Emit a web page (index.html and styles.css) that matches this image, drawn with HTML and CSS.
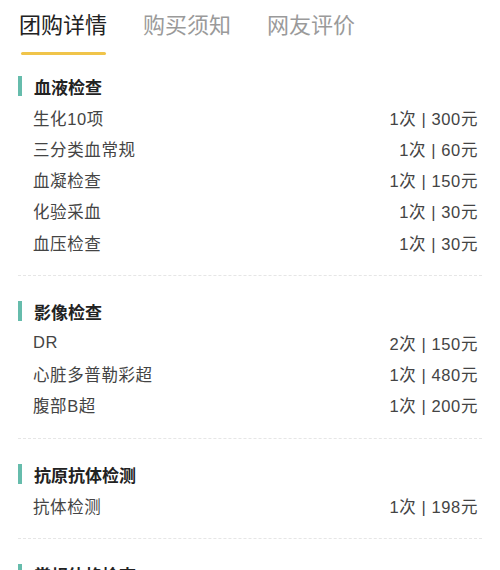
FILE: index.html
```html
<!DOCTYPE html>
<html lang="zh">
<head>
<meta charset="utf-8">
<link rel="stylesheet" href="styles.css">
</head>
<body>
<div class="tabs">
  <div class="tab active"><span>团购详情</span><i class="underline"></i></div>
  <div class="tab"><span>购买须知</span></div>
  <div class="tab"><span>网友评价</span></div>
</div>
<div class="section first">
  <div class="heading">血液检查</div>
  <div class="row"><span>生化10项</span><span>1次 | 300元</span></div>
  <div class="row"><span>三分类血常规</span><span>1次 | 60元</span></div>
  <div class="row"><span>血凝检查</span><span>1次 | 150元</span></div>
  <div class="row"><span>化验采血</span><span>1次 | 30元</span></div>
  <div class="row"><span>血压检查</span><span>1次 | 30元</span></div>
</div>
<div class="section">
  <div class="heading">影像检查</div>
  <div class="row"><span>DR</span><span>2次 | 150元</span></div>
  <div class="row"><span>心脏多普勒彩超</span><span>1次 | 480元</span></div>
  <div class="row"><span>腹部B超</span><span>1次 | 200元</span></div>
</div>
<div class="section">
  <div class="heading">抗原抗体检测</div>
  <div class="row"><span>抗体检测</span><span>1次 | 198元</span></div>
</div>
<div class="section">
  <div class="heading">常规体格检查</div>
</div>
</body>
</html>
```
FILE: styles.css
```css
html, body {
  margin: 0;
  padding: 0;
  background: #fff;
}
body {
  font-family: "Noto Sans CJK SC", "Noto Sans", sans-serif;
  width: 500px;
  height: 570px;
  overflow: hidden;
}
.tabs {
  display: flex;
  gap: 36px;
  padding: 8px 0 0 19px;
  height: 47px;
}
.tab {
  display: flex;
  flex-direction: column;
  align-items: center;
  font-size: 22px;
  line-height: 30px;
  color: #9a9a9a;
}
.tab.active {
  color: #222;
}
.underline {
  display: block;
  margin-top: 14px;
  width: 85px;
  height: 3px;
  border-radius: 2px;
  background: #f0c44a;
}
.section {
  margin: 0 18px;
  padding: 19px 0 17px;
  border-bottom: 1px dashed #e6e6e6;
}
.section.first {
  padding-top: 15px;
}
.heading {
  display: flex;
  align-items: center;
  gap: 12px;
  height: 32px;
  font-size: 17px;
  font-weight: 700;
  color: #222;
}
.heading::before {
  content: "";
  width: 4px;
  height: 20px;
  background: #66bcac;
}
.row {
  display: flex;
  justify-content: space-between;
  align-items: center;
  height: 31.25px;
  padding: 0 4px 0 15px;
  font-family: "Liberation Sans", "Noto Sans CJK SC", sans-serif;
  font-size: 16.5px;
  letter-spacing: 0.6px;
  color: #444;
}
```
